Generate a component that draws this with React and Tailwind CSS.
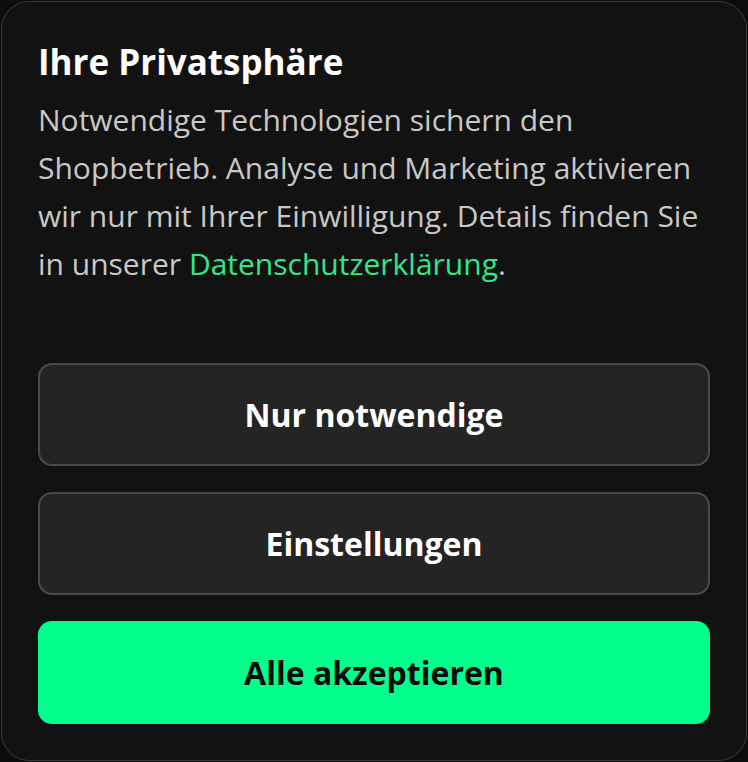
import React from 'react';

const buttons = [
    { label: 'Nur notwendige', primary: false },
    { label: 'Einstellungen', primary: false },
    { label: 'Alle akzeptieren', primary: true },
];

export default function App() {
    return (
        <div className="w-[748px] h-[762px] bg-[#0c0c0e] p-px overflow-hidden" style={{ fontFamily: '"Open Sans", "Noto Sans", sans-serif' }}>
            <div className="h-full rounded-[28px] border border-[#3a3a3a] bg-[#121212] px-[36px] pt-[36px] pb-[36px] flex flex-col">
                <h2 className="text-[35px] leading-[48px] font-bold text-white">Ihre Privatsphäre</h2>
                <p className="text-[30px] leading-[48px] text-[#c8c8c8] mt-[10px]">
                    Notwendige Technologien sichern den Shopbetrieb. Analyse und Marketing aktivieren wir nur mit Ihrer Einwilligung. Details finden Sie in unserer{' '}
                    <a href="#" className="text-[#2ee88c]">Datenschutzerklärung</a>.
                </p>

                {/* Actions */}
                <div className="mt-auto flex flex-col gap-[26px]">
                    {buttons.map((b) => (
                        <button
                            key={b.label}
                            className={
                                b.primary
                                    ? 'h-[103px] rounded-[14px] bg-[#00ff8c] text-[#0a0a0a] text-[32px] font-bold'
                                    : 'h-[103px] rounded-[14px] bg-[#242424] border-2 border-[#4a4a4a] text-white text-[32px] font-bold'
                            }
                        >
                            {b.label}
                        </button>
                    ))}
                </div>
            </div>
        </div>
    );
}
